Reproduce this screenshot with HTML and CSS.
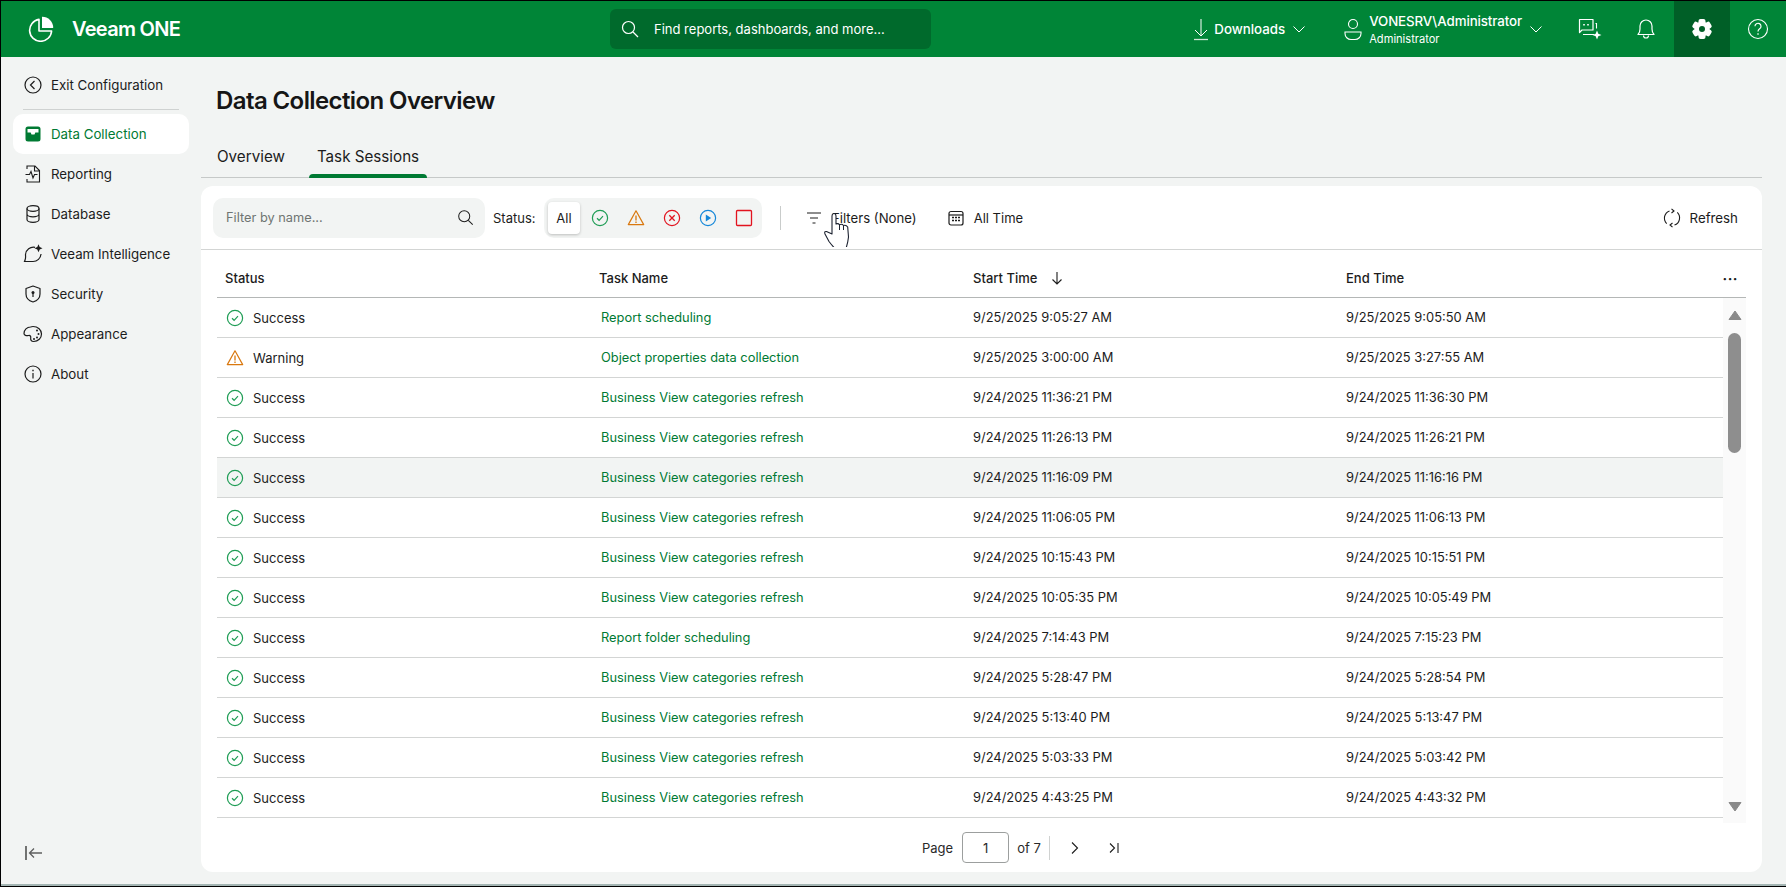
FILE: index.html
```html
<!DOCTYPE html>
<html lang="en">
<head>
<meta charset="utf-8">
<title>Veeam ONE - Data Collection Overview</title>
<link rel="stylesheet" href="styles.css">
</head>
<body>
<svg class="defs" aria-hidden="true">
  <symbol id="i-success" viewBox="0 0 18 18"><circle cx="9" cy="9" r="7.6" fill="none" stroke="#1f9d55" stroke-width="1.2"/><path d="M6 9.3l2.1 2L12 7.2" fill="none" stroke="#1f9d55" stroke-width="1.2"/></symbol>
  <symbol id="i-warning" viewBox="0 0 18 18"><path d="M9 1.8L1.3 15.6h15.4z" fill="none" stroke="#d9780f" stroke-width="1.2" stroke-linejoin="round"/><path d="M9 6.5v5M9 12.6v1.3" stroke="#d9780f" stroke-width="1.3"/></symbol>
  <symbol id="i-error" viewBox="0 0 18 18"><circle cx="9" cy="9" r="7.6" fill="none" stroke="#e2131f" stroke-width="1.2"/><path d="M6.3 6.3l5.4 5.4M11.7 6.3l-5.4 5.4" stroke="#e2131f" stroke-width="1.3"/></symbol>
  <symbol id="i-running" viewBox="0 0 18 18"><circle cx="9" cy="9" r="7.6" fill="none" stroke="#1487d9" stroke-width="1.2"/><path d="M6.8 5.4l5.4 3.6-5.4 3.6z" fill="#1487d9"/></symbol>
  <symbol id="i-stopped" viewBox="0 0 18 18"><rect x="1.500" y="1.500" width="15" height="15" rx="1" fill="none" stroke="#e2131f" stroke-width="1.300"/></symbol>
  <symbol id="i-chev" viewBox="0 0 16 16"><path d="M2.5 5.5L8 11l5.5-5.5" fill="none" stroke="#fff" stroke-width="1"/></symbol>
</svg>

<div class="window">
  <header class="topbar">
    <div class="brand">
      <svg class="logo" viewBox="0 0 26 26"><path d="M11 3.4A11 11 0 1 0 23.6 15H11z" fill="none" stroke="#fff" stroke-width="1.6" stroke-linejoin="round"/><path d="M14 .8A11 11 0 0 1 25.2 12H14z" fill="#fff"/></svg>
      <span class="brand-name">Veeam ONE</span>
    </div>
    <div class="global-search">
      <svg class="ico20" viewBox="0 0 20 20"><circle cx="8.5" cy="8.5" r="6" fill="none" stroke="#fff" stroke-width="1.2"/><path d="M13 13l5 5" stroke="#fff" stroke-width="1.2"/></svg>
      <span>Find reports, dashboards, and more...</span>
    </div>
    <div class="spacer"></div>
    <div class="downloads">
      <svg class="ico24" viewBox="0 0 24 24"><path d="M12 2v17M6 13l6 6 6-6" fill="none" stroke="#fff" stroke-width="1"/><path d="M5 22.500h14" stroke="#cfe6d8" stroke-width="1.300"/></svg>
      <span class="dl-text">Downloads</span>
      <svg class="chev"><use href="#i-chev"/></svg>
    </div>
    <div class="user">
      <svg class="ico24" viewBox="0 0 24 24"><circle cx="12" cy="7" r="4.500" fill="none" stroke="#fff" stroke-width="1.100"/><path d="M4 15h16v1.500a6 6 0 0 1-6 6h-4a6 6 0 0 1-6-6z" fill="none" stroke="#fff" stroke-width="1.100"/></svg>
      <div class="user-text">
        <div class="user-name">VONESRV\Administrator</div>
        <div class="user-role">Administrator</div>
      </div>
      <svg class="chev"><use href="#i-chev"/></svg>
    </div>
    <div class="top-btn">
      <svg class="ico24" viewBox="0 0 24 24"><path d="M1.500 2.500h13.500v10.500h-11l-2.500 2.500z" fill="none" stroke="#fff" stroke-width="1.200" stroke-linejoin="round"/><path d="M6 7v1.500M10 7v1.500" stroke="#fff" stroke-width="1.600"/><path d="M17.500 6.500h1v5M5 17.500h11" fill="none" stroke="#fff" stroke-width="1.100"/><path d="M19 13.500l1.300 3.200 3.200 1.300-3.200 1.300-1.300 3.200-1.300-3.200-3.200-1.300 3.200-1.300z" fill="#fff"/></svg>
    </div>
    <div class="top-btn">
      <svg class="ico24" viewBox="0 0 24 24"><path d="M4 17.500c1.500-1.500 2-3 2-5.500V9a6 6 0 0 1 12 0v3c0 2.500.5 4 2 5.500z" fill="none" stroke="#fff" stroke-width="1.200" stroke-linejoin="round"/><path d="M9.500 18.500a2.500 2.500 0 0 0 5 0" fill="none" stroke="#fff" stroke-width="1.200"/></svg>
    </div>
    <div class="top-btn is-active">
      <svg class="ico24" viewBox="0 0 24 24"><g fill="#fff"><rect x="8.500" y="2" width="7" height="20" rx="2"/><rect x="8.500" y="2" width="7" height="20" rx="2" transform="rotate(60 12 12)"/><rect x="8.500" y="2" width="7" height="20" rx="2" transform="rotate(120 12 12)"/><circle cx="12" cy="12" r="7.500"/></g><circle cx="12" cy="12" r="3" fill="#005f27"/></svg>
    </div>
    <div class="top-btn">
      <svg class="ico24" viewBox="0 0 24 24"><circle cx="12" cy="12" r="9.500" fill="none" stroke="#fff" stroke-width="1.100"/><path d="M9 9.300a3 3 0 1 1 4.600 2.500c-1 .7-1.600 1.300-1.600 2.700" fill="none" stroke="#fff" stroke-width="1.200"/><path d="M12 16.200v1.600" stroke="#fff" stroke-width="1.300"/></svg>
    </div>
  </header>

  <div class="body">
    <nav class="sidebar">
      <a class="nav-item">
        <svg class="nav-ico" viewBox="0 0 20 20"><circle cx="10" cy="10" r="8" fill="none" stroke="#1c1c1c" stroke-width="1.200"/><path d="M11.500 6L7.500 10l4 4" fill="none" stroke="#1c1c1c" stroke-width="1.200"/></svg>
        <span>Exit Configuration</span>
      </a>
      <div class="nav-divider"></div>
      <a class="nav-item is-active">
        <svg class="nav-ico" viewBox="0 0 20 20"><path d="M5 2.500h10a2.500 2.500 0 0 1 2.500 2.500v10a2.500 2.500 0 0 1-2.500 2.500H5A2.500 2.500 0 0 1 2.500 15V5A2.500 2.500 0 0 1 5 2.500z" fill="#007a33"/><path d="M4.500 5h11v3.500h-3.200l-.8 2h-3l-.8-2H4.500z" fill="#fff"/></svg>
        <span>Data Collection</span>
      </a>
      <a class="nav-item">
        <svg class="nav-ico" viewBox="0 0 20 20"><path d="M4 5V2h8l4.500 4.500V18H4v-3M11.500 2.500V7h5" fill="none" stroke="#1c1c1c" stroke-width="1.100"/><path d="M2.500 10.500h4l1.500-3 2 6.500 1.500-3.500h3" fill="none" stroke="#1c1c1c" stroke-width="1.100"/></svg>
        <span>Reporting</span>
      </a>
      <a class="nav-item">
        <svg class="nav-ico" viewBox="0 0 20 20"><ellipse cx="10" cy="4.500" rx="6" ry="2.800" fill="none" stroke="#1c1c1c" stroke-width="1.200"/><path d="M4 4.500v11c0 1.500 2.700 2.800 6 2.800s6-1.300 6-2.800v-11M4 10c0 1.500 2.700 2.800 6 2.800s6-1.300 6-2.800" fill="none" stroke="#1c1c1c" stroke-width="1.200"/></svg>
        <span>Database</span>
      </a>
      <a class="nav-item">
        <svg class="nav-ico" viewBox="0 0 20 20"><path d="M12 3.300A8 8 0 0 0 2.500 10.500c0 1.600.4 3-.3 5-.2.800-.7 2-.7 2h8.500a8 8 0 0 0 8-7.500" fill="none" stroke="#1c1c1c" stroke-width="1.200"/><path d="M15.500.3l1.200 2.800 2.800 1.200-2.800 1.200-1.200 2.800-1.200-2.800-2.800-1.200 2.800-1.200z" fill="#1c1c1c"/></svg>
        <span>Veeam Intelligence</span>
      </a>
      <a class="nav-item">
        <svg class="nav-ico" viewBox="0 0 20 20"><path d="M10 2l7 2.500v5.500c0 4-3 6.800-7 8-4-1.200-7-4-7-8V4.500z" fill="none" stroke="#1c1c1c" stroke-width="1.200" stroke-linejoin="round"/><circle cx="10" cy="8.500" r="1.500" fill="#1c1c1c"/><path d="M10 9v4" stroke="#1c1c1c" stroke-width="1.200"/></svg>
        <span>Security</span>
      </a>
      <a class="nav-item">
        <svg class="nav-ico" viewBox="0 0 20 20"><path d="M7.500 3C4 3 1 6 1 9.500c0 2 2.500 2.500 4.500 2 2-.3 2.500 1 2.200 2.500-.2 1.500.3 3.500 3 3.500 4.500 0 7.800-3.500 7.800-7.500S15 2.500 10 2.500c-1 0-1.700.2-2.500.5z" fill="none" stroke="#1c1c1c" stroke-width="1.200"/><g fill="#1c1c1c"><circle cx="14" cy="6.500" r="1"/><circle cx="15.500" cy="10" r="1"/><circle cx="14" cy="13.500" r="1"/><circle cx="11" cy="15" r="1"/></g></svg>
        <span>Appearance</span>
      </a>
      <a class="nav-item">
        <svg class="nav-ico" viewBox="0 0 20 20"><circle cx="10" cy="10" r="8" fill="none" stroke="#1c1c1c" stroke-width="1.200"/><path d="M10 9v5.500" stroke="#1c1c1c" stroke-width="1.200"/><path d="M10 5.800v1.400" stroke="#1c1c1c" stroke-width="1.400"/></svg>
        <span>About</span>
      </a>
      <div class="collapse">
        <svg class="collapse-ico" viewBox="0 0 18 14"><path d="M1 0v14" stroke="#1c1c1c" stroke-width="1.200"/><path d="M17 7H4.500M9 2.500L4.500 7 9 11.500" fill="none" stroke="#5f5f5f" stroke-width="1.300"/></svg>
      </div>
    </nav>

    <main class="main">
      <h1 class="page-title">Data Collection Overview</h1>
      <div class="tabs">
        <div class="tab">Overview</div>
        <div class="tab is-active">Task Sessions</div>
      </div>

      <section class="card">
        <div class="toolbar">
          <div class="name-filter">
            <span>Filter by name...</span>
            <svg class="ico18" viewBox="0 0 20 20"><circle cx="8.500" cy="8.500" r="6.500" fill="none" stroke="#1c1c1c" stroke-width="1.200"/><path d="M13.300 13.300l5.200 5.200" stroke="#1c1c1c" stroke-width="1.200"/></svg>
          </div>
          <span class="status-label">Status:</span>
          <div class="segments">
            <div class="seg-all">All</div>
            <div class="seg"><svg class="st-ico"><use href="#i-success"/></svg></div>
            <div class="seg"><svg class="st-ico"><use href="#i-warning"/></svg></div>
            <div class="seg"><svg class="st-ico"><use href="#i-error"/></svg></div>
            <div class="seg"><svg class="st-ico"><use href="#i-running"/></svg></div>
            <div class="seg"><svg class="st-ico"><use href="#i-stopped"/></svg></div>
          </div>
          <div class="tool-divider"></div>
          <div class="tool tool-filters">
            <svg class="ico20" viewBox="0 0 20 20"><path d="M3 5h14M6 10h8M8.500 15h3" stroke="#1c1c1c" stroke-width="1.200"/></svg>
            <span>Filters (None)</span>
          </div>
          <div class="tool tool-time">
            <svg class="ico20" viewBox="0 0 20 20"><rect x="3" y="3.500" width="14" height="13.500" rx="2" fill="none" stroke="#1c1c1c" stroke-width="1.200"/><path d="M3 7h14" stroke="#1c1c1c" stroke-width="1.200"/><path d="M6 9.500h2M9 9.500h2M12 9.500h2M6 12.500h2M9 12.500h2M12 12.500h2" stroke="#1c1c1c" stroke-width="1.300"/></svg>
            <span>All Time</span>
          </div>
          <div class="tool tool-refresh">
            <svg class="ico20" viewBox="0 0 20 20"><path d="M7.500 2.900A7.700 7.700 0 0 0 4.700 15.600M12.500 17.100A7.700 7.700 0 0 0 15.300 4.400" fill="none" stroke="#1c1c1c" stroke-width="1.100"/><path d="M9.500.8L12 3l-2.500 2M10.500 19.200L8 17l2.500-2" fill="none" stroke="#1c1c1c" stroke-width="1.100"/></svg>
            <span>Refresh</span>
          </div>
        </div>

        <div class="grid-head">
          <div class="cell">Status</div>
          <div class="cell">Task Name</div>
          <div class="cell sort">Start Time
            <svg class="sort-ico" viewBox="0 0 12 14"><path d="M6 1v12M1.500 8.500L6 13l4.500-4.500" fill="none" stroke="#1c1c1c" stroke-width="1.100"/></svg>
          </div>
          <div class="cell head-end"><span>End Time</span><span class="more">···</span></div>
        </div>

        <div class="grid-body">
          <div class="rows">
            <div class="row"><div class="cell status"><svg class="st-ico"><use href="#i-success"/></svg>Success</div><a class="cell link">Report scheduling</a><div class="cell date">9/25/2025 9:05:27 AM</div><div class="cell date">9/25/2025 9:05:50 AM</div></div>
            <div class="row"><div class="cell status"><svg class="st-ico"><use href="#i-warning"/></svg>Warning</div><a class="cell link">Object properties data collection</a><div class="cell date">9/25/2025 3:00:00 AM</div><div class="cell date">9/25/2025 3:27:55 AM</div></div>
            <div class="row"><div class="cell status"><svg class="st-ico"><use href="#i-success"/></svg>Success</div><a class="cell link">Business View categories refresh</a><div class="cell date">9/24/2025 11:36:21 PM</div><div class="cell date">9/24/2025 11:36:30 PM</div></div>
            <div class="row"><div class="cell status"><svg class="st-ico"><use href="#i-success"/></svg>Success</div><a class="cell link">Business View categories refresh</a><div class="cell date">9/24/2025 11:26:13 PM</div><div class="cell date">9/24/2025 11:26:21 PM</div></div>
            <div class="row is-hover"><div class="cell status"><svg class="st-ico"><use href="#i-success"/></svg>Success</div><a class="cell link">Business View categories refresh</a><div class="cell date">9/24/2025 11:16:09 PM</div><div class="cell date">9/24/2025 11:16:16 PM</div></div>
            <div class="row"><div class="cell status"><svg class="st-ico"><use href="#i-success"/></svg>Success</div><a class="cell link">Business View categories refresh</a><div class="cell date">9/24/2025 11:06:05 PM</div><div class="cell date">9/24/2025 11:06:13 PM</div></div>
            <div class="row"><div class="cell status"><svg class="st-ico"><use href="#i-success"/></svg>Success</div><a class="cell link">Business View categories refresh</a><div class="cell date">9/24/2025 10:15:43 PM</div><div class="cell date">9/24/2025 10:15:51 PM</div></div>
            <div class="row"><div class="cell status"><svg class="st-ico"><use href="#i-success"/></svg>Success</div><a class="cell link">Business View categories refresh</a><div class="cell date">9/24/2025 10:05:35 PM</div><div class="cell date">9/24/2025 10:05:49 PM</div></div>
            <div class="row"><div class="cell status"><svg class="st-ico"><use href="#i-success"/></svg>Success</div><a class="cell link">Report folder scheduling</a><div class="cell date">9/24/2025 7:14:43 PM</div><div class="cell date">9/24/2025 7:15:23 PM</div></div>
            <div class="row"><div class="cell status"><svg class="st-ico"><use href="#i-success"/></svg>Success</div><a class="cell link">Business View categories refresh</a><div class="cell date">9/24/2025 5:28:47 PM</div><div class="cell date">9/24/2025 5:28:54 PM</div></div>
            <div class="row"><div class="cell status"><svg class="st-ico"><use href="#i-success"/></svg>Success</div><a class="cell link">Business View categories refresh</a><div class="cell date">9/24/2025 5:13:40 PM</div><div class="cell date">9/24/2025 5:13:47 PM</div></div>
            <div class="row"><div class="cell status"><svg class="st-ico"><use href="#i-success"/></svg>Success</div><a class="cell link">Business View categories refresh</a><div class="cell date">9/24/2025 5:03:33 PM</div><div class="cell date">9/24/2025 5:03:42 PM</div></div>
            <div class="row"><div class="cell status"><svg class="st-ico"><use href="#i-success"/></svg>Success</div><a class="cell link">Business View categories refresh</a><div class="cell date">9/24/2025 4:43:25 PM</div><div class="cell date">9/24/2025 4:43:32 PM</div></div>
          </div>
          <div class="scrollbar">
            <svg class="sb-arrow" viewBox="0 0 14 11"><path d="M7 1l6 8.500H1z" fill="#8a8a8a" stroke="#8a8a8a" stroke-linejoin="round"/></svg>
            <div class="sb-thumb"></div>
            <svg class="sb-arrow sb-down" viewBox="0 0 14 11"><path d="M7 10L1 1.500h12z" fill="#8a8a8a" stroke="#8a8a8a" stroke-linejoin="round"/></svg>
          </div>
        </div>

        <div class="pager">
          <span>Page</span>
          <div class="page-input">1</div>
          <span>of 7</span>
          <div class="pager-divider"></div>
          <svg class="pg-next" viewBox="0 0 16 16"><path d="M5 2.500L10.500 8 5 13.500" fill="none" stroke="#1c1c1c" stroke-width="1.100"/></svg>
          <svg class="pg-last" viewBox="0 0 16 16"><path d="M4 3.500L8.500 8 4 12.500M12 3v10" fill="none" stroke="#1c1c1c" stroke-width="1.100"/></svg>
        </div>
      </section>
    </main>
  </div>

  <svg class="cursor" viewBox="0 0 26 34"><path d="M8 21V3Q8 .5 10 .5T12 3v8q2.300-1 3.500.7 2.500-1.200 4 .8 2.500-1 4.200 1.500l.8 10q-.5 5-2.500 11.500H11q-3-3-6-7L1 21q-1-3 1.500-2.500z" fill="#fff" stroke="#1c2230" stroke-width="1.100" stroke-linejoin="round"/><path d="M15.500 11.700V17M19.500 12.500V17" stroke="#1c2230" stroke-width="1"/></svg>
</div>
</body>
</html>
```
FILE: styles.css
```css
* { box-sizing: border-box; }
html, body { margin: 0; height: 100%; }
body {
  width: 1786px;
  height: 887px;
  overflow: hidden;
  font-family: Inter, "Liberation Sans", sans-serif;
  font-size: 13px;
  color: #1c1c1c;
  background: #f2f4f3;
}
.defs { width: 0; height: 0; display: block; position: absolute; }

.window {
  position: relative;
  width: 1786px;
  height: 887px;
  display: flex;
  flex-direction: column;
  border-left: 1px solid #000;
  border-top: 1px solid #000;
  border-bottom: 1px solid #000;
}

/* top bar */
.topbar {
  flex: 0 0 56px;
  display: flex;
  align-items: center;
  background: #008537;
  color: #fff;
}
.brand {
  flex: 0 0 609px;
  display: flex;
  align-items: center;
  gap: 18px;
  padding-left: 27px;
}
.logo { width: 26px; height: 26px; }
.brand-name { font-size: 20px; font-weight: 600; letter-spacing: -0.7px; }
.global-search {
  flex: 0 0 321px;
  height: 40px;
  display: flex;
  align-items: center;
  gap: 14px;
  padding-left: 10px;
  background: #006a2c;
  border-radius: 6px;
  font-size: 13px;
}
.spacer { flex: 1; }
.ico18 { width: 17px; height: 17px; flex: none; }
.ico20 { width: 20px; height: 20px; flex: none; }
.ico24 { width: 24px; height: 24px; flex: none; }
.chev { width: 16px; height: 16px; flex: none; }
.downloads {
  display: flex;
  align-items: center;
  margin-right: 34px;
}
.dl-text { margin: 0 6px 0 1px; font-weight: 500; font-size: 13.3px; }
.user { display: flex; align-items: center; margin-right: 18px; }
.user-text { margin: 0 6px 0 4px; }
.user-name { font-weight: 500; font-size: 13.3px; line-height: 18px; letter-spacing: -0.1px; }
.user-role { font-size: 11.100px; line-height: 16px; margin-top: 1px; }
.top-btn {
  flex: 0 0 56px;
  height: 56px;
  display: flex;
  align-items: center;
  justify-content: center;
}
.top-btn.is-active { background: #005f27; }

/* body */
.body { flex: 1; display: flex; min-height: 0; padding-bottom: 2px; background: linear-gradient(#f2f4f3, #f2f4f3) top / 100% calc(100% - 2px) no-repeat, #a4b5b3; }

/* sidebar */
.sidebar {
  flex: 0 0 200px;
  display: flex;
  flex-direction: column;
  padding: 8px 12px 0;
  font-size: 13.3px;
}
.nav-item {
  height: 40px;
  display: flex;
  align-items: center;
  gap: 8px;
  padding: 0 0 1px 10px;
  border-radius: 10px;
}
.nav-item.is-active { background: #fff; color: #007a33; }
.nav-ico { width: 20px; height: 20px; flex: none; }
.nav-divider {
  height: 1px;
  margin: 4px 10px 4px 10px;
  background: #cfd2d1;
}
.collapse { margin-top: auto; height: 32px; margin-bottom: 6px; padding-left: 12px; }
.collapse-ico { width: 18px; height: 14px; }

/* main */
.main { flex: 1; display: flex; flex-direction: column; padding-right: 24px; min-width: 0; }
.page-title {
  margin: 28px 0 0 15px;
  height: 32px;
  font-size: 24px;
  line-height: 32px;
  font-weight: 600;
  letter-spacing: -0.6px;
  color: #161616;
}
.tabs {
  display: flex;
  gap: 16px;
  margin-top: 20px;
  padding-left: 8px;
  height: 41px;
  border-bottom: 1px solid #c6c9c8;
}
.tab {
  position: relative;
  padding: 8px 8px 0;
  height: 41px;
  font-size: 15.2px;
  line-height: 24px;
}
.tab.is-active::after {
  content: "";
  position: absolute;
  left: 0;
  right: 0;
  bottom: 0;
  height: 4px;
  background: #007a33;
  border-radius: 4px 4px 0 0;
}

/* card */
.card {
  flex: 1;
  margin: 8px 0 12px;
  background: #fff;
  border-radius: 12px;
  display: flex;
  flex-direction: column;
  min-height: 0;
}
.toolbar {
  flex: 0 0 64px;
  display: flex;
  align-items: center;
  padding: 0 24px 0 12px;
  border-bottom: 1px solid #d3d5d4;
}
.name-filter {
  flex: 0 0 272px;
  height: 40px;
  display: flex;
  align-items: center;
  justify-content: space-between;
  padding: 0 11px 0 13px;
  background: #f2f4f3;
  border-radius: 10px;
  color: #6f7472;
  font-size: 12.8px;
}
.status-label { margin-left: 8px; width: 51px; }
.segments {
  flex: 0 0 218px;
  height: 40px;
  display: flex;
  align-items: center;
  padding: 4px 0 4px 4px;
  background: #f2f4f3;
  border-radius: 10px;
}
.seg-all {
  flex: 0 0 32px;
  height: 32px;
  margin-right: 2px;
  display: flex;
  align-items: center;
  justify-content: center;
  background: #fff;
  border-radius: 4px;
  box-shadow: 0 1px 3px rgba(0, 0, 0, .22);
}
.seg { flex: 0 0 36px; height: 32px; display: flex; align-items: center; justify-content: center; }
.st-ico { width: 18px; height: 18px; flex: none; }
.tool-divider { width: 1px; height: 24px; margin-left: 18px; background: #c9cccb; }
.tool { display: flex; align-items: center; gap: 8px; }
.tool-filters { margin-left: 23px; font-size: 13.2px; }
.tool-time { margin-left: 29px; }
.tool-refresh { margin-left: auto; font-size: 13.3px; }

/* grid */
.grid-head {
  flex: 0 0 48px;
  margin: 0 16px;
  padding-top: 9px;
  display: grid;
  grid-template-columns: 374px 374px 373px 1fr;
  align-items: center;
  border-bottom: 1px solid #b4b7b6;
  font-weight: 500;
}
.cell { padding-left: 8px; }
.sort { display: flex; align-items: center; gap: 13px; }
.sort-ico { width: 12px; height: 14px; margin-left: 1px; }
.head-end { display: flex; align-items: center; justify-content: space-between; padding-right: 8px; }
.more { font-weight: 700; font-size: 14px; letter-spacing: .5px; }
.grid-body {
  flex: 0 0 525px;
  display: flex;
  margin: 0 16px;
  overflow: hidden;
}
.rows { flex: 0 0 1506px; }
.row {
  height: 40px;
  display: grid;
  grid-template-columns: 374px 374px 373px 1fr;
  align-items: center;
  border-bottom: 1px solid #d3d5d4;
}
.row.is-hover { background: #f2f4f3; }
.status { display: flex; align-items: center; gap: 9px; padding-left: 9px; }
.link { color: #007a33; padding-left: 10px; font-size: 12.85px; }
.date { font-size: 12.9px; }
.scrollbar {
  flex: 1;
  position: relative;
  background: #fafafa;
  display: flex;
  flex-direction: column;
  align-items: center;
  padding-top: 12px;
}
.sb-arrow { width: 14px; height: 11px; flex: none; }
.sb-thumb { width: 13px; height: 120px; margin-top: 12px; background: #8e8e8e; border-radius: 7px; }
.sb-down { margin-top: auto; margin-bottom: 11px; }

/* pager */
.pager {
  flex: 1;
  display: flex;
  align-items: center;
  padding-left: 721px;
  color: #2a2a2a;
}
.page-input {
  width: 47px;
  height: 31px;
  margin: 0 8px 0 9px;
  display: flex;
  align-items: center;
  justify-content: center;
  border: 1px solid #9c9f9e;
  border-radius: 4px;
}
.pager-divider { width: 1px; height: 24px; margin-left: 8px; background: #d0d2d1; }
.pg-next { width: 16px; height: 16px; margin-left: 17px; }
.pg-last { width: 16px; height: 16px; margin-left: 23px; }

/* pointer overlay */
.cursor {
  position: absolute;
  left: 823px;
  top: 212px;
  width: 26px;
  height: 34px;
}
```
